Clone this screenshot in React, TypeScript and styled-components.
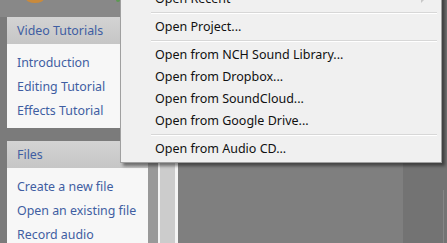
import React from 'react'
import styled, { createGlobalStyle } from 'styled-components';

const GlobalStyle = createGlobalStyle`
    html, body {
        margin : 0;
        padding : 0;
        background : #7f7f7f;
    }
`

const blue = '#3f5ea2';

const Screen = styled.div`
    position : relative;
    width : 447px;
    height : 243px;
    overflow : hidden;
    display : flex;
    flex-direction : row;
    font-family : "Noto Sans", "Open Sans", sans-serif;
`

const Sidebar = styled.div`
    width : 148px;
    flex-shrink : 0;
    background : #7b7b7b;
    display : flex;
    flex-direction : column;

    & > * { flex-shrink : 0; }
`

const TopStrip = styled.div`
    position : relative;
    height : 17px;
    background : #888888;
    margin-right : -10px;
`

const Logo = styled.div`
    position : absolute;
    left : 26px;
    top : -6px;
    width : 18px;
    height : 9px;
    border-radius : 50%;
    background : #c98a3c;
`

const GreenDot = styled.div`
    position : absolute;
    left : 116px;
    top : -2px;
    width : 4px;
    height : 4px;
    border-radius : 50%;
    background : #5c9a52;
`

const Card = styled.div<{gap? : number}>`
    margin-left : 7px;
    margin-bottom : ${p => p.gap ?? 0}px;
    display : flex;
    flex-direction : column;
`

const CardHeader = styled.div`
    height : 27px;
    background : linear-gradient(#d3d3d3, #c6c6c6);
    color : ${blue};
    font-size : 12.4px;
    line-height : 27px;
    padding-left : 10px;
`

const CardBody = styled.div`
    background : #f7f7f7;
    padding : 7px 0 5px 10px;
    display : flex;
    flex-direction : column;
`

const Link = styled.div`
    height : 24px;
    line-height : 24px;
    font-size : 12.4px;
    color : ${blue};
    white-space : nowrap;
`

const Splitter = styled.div`
    width : 30px;
    flex-shrink : 0;
    display : flex;
    flex-direction : row;
    padding-top : 17px;
    background : #888888;

    & > div:nth-child(1) { width : 10px; background : #999999; }
    & > div:nth-child(2) { width : 2px; background : #f4f4f4; }
    & > div:nth-child(3) { width : 15px; background : #cccccc; }
    & > div:nth-child(4) { width : 3px; background : #f4f4f4; }
`

const Stripe = styled.div``

const Main = styled.div`
    flex : 1;
    display : flex;
    flex-direction : row;
`

const Canvas = styled.div`
    width : 225px;
    background : #7f7f7f;
`

const SideArea = styled.div`
    flex : 1;
    background : #737373;
    position : relative;

    &::after {
        content : '';
        position : absolute;
        left : 40px;
        top : 190px;
        bottom : 0;
        width : 1px;
        background : #858585;
    }
`

const Menu = styled.div`
    position : absolute;
    left : 120px;
    top : -16px;
    width : 316px;
    background : #f0f0f0;
    border : 1px solid #a0a0a0;
    padding : 3px 2px 2px 2px;
    box-shadow : 3px 3px 3px rgba(0, 0, 0, 0.45);
    font-size : 12.5px;
    color : #111111;
`

const MenuItem = styled.div`
    position : relative;
    height : 22px;
    line-height : 22px;
    padding-left : 32px;
    white-space : nowrap;
`

const SubArrow = styled.span`
    position : absolute;
    right : 14px;
    top : 7px;
    width : 0;
    height : 0;
    border-top : 4px solid transparent;
    border-bottom : 4px solid transparent;
    border-left : 4px solid #c8c8c8;
`

const Separator = styled.div`
    height : 6px;
    display : flex;
    align-items : center;
    padding-left : 28px;
    padding-right : 2px;

    &::before {
        content : '';
        flex : 1;
        height : 1px;
        background : #d7d7d7;
        border-bottom : 1px solid #ffffff;
    }
`

const videoLinks = ['Introduction', 'Editing Tutorial', 'Effects Tutorial'];
const fileLinks = ['Create a new file', 'Open an existing file', 'Record audio'];
const cloudItems = ['Open from NCH Sound Library...', 'Open from Dropbox...', 'Open from SoundCloud...', 'Open from Google Drive...'];

export default function App() {
    return (
        <>
            <GlobalStyle />
            <Screen>
                <Sidebar>
                    <TopStrip>
                        <Logo />
                        <GreenDot />
                    </TopStrip>
                    <Card gap={13}>
                        <CardHeader>Video Tutorials</CardHeader>
                        <CardBody>
                            {videoLinks.map(l => <Link key={l}>{l}</Link>)}
                        </CardBody>
                    </Card>
                    <Card>
                        <CardHeader>Files</CardHeader>
                        <CardBody>
                            {fileLinks.map(l => <Link key={l}>{l}</Link>)}
                        </CardBody>
                    </Card>
                </Sidebar>
                <Splitter>
                    <Stripe />
                    <Stripe />
                    <Stripe />
                    <Stripe />
                </Splitter>
                <Main>
                    <Canvas />
                    <SideArea />
                </Main>

                <Menu>
                    <MenuItem>Open Recent<SubArrow /></MenuItem>
                    <Separator />
                    <MenuItem>Open Project...</MenuItem>
                    <Separator />
                    {cloudItems.map(i => <MenuItem key={i}>{i}</MenuItem>)}
                    <Separator />
                    <MenuItem>Open from Audio CD...</MenuItem>
                </Menu>
            </Screen>
        </>
    )
}
